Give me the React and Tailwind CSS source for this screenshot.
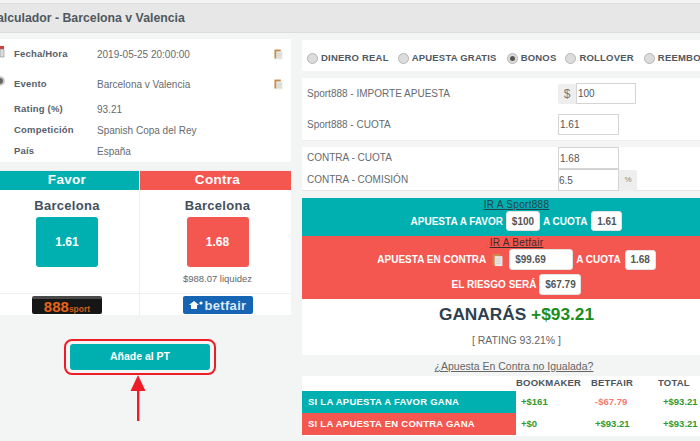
function CopyIcon({ className }) {
  return (
    <svg viewBox="0 0 10 12" className={className}>
      <rect x="0.5" y="0.5" width="7" height="10" fill="#c98a4b" />
      <rect x="2.5" y="2.5" width="7" height="9" fill="#e9e9e6" />
      <path d="M3.5 5h5M3.5 7h5M3.5 9h5" stroke="#c9c9c9" strokeWidth="0.7" />
    </svg>
  );
}

function InfoRow({ label, value, copy, className, icon }) {
  return (
    <div className={`flex items-center ${className}`}>
      {icon}
      <div className="w-[97px] pl-[14px] font-bold text-[#56606c] tracking-[0.2px]">{label}</div>
      <div className="flex-1 text-[10px] text-[#666b70]">{value}</div>
      {copy && <CopyIcon className="w-[9px] h-[11px] mr-[8px]" />}
    </div>
  );
}

function Chip({ children, className = "" }) {
  return (
    <span className={`inline-flex items-center justify-center h-[20px] rounded-[3px] bg-white border border-[#e3e3e3] text-[10px] font-bold text-[#555] ${className}`}>
      {children}
    </span>
  );
}

function Radio({ checked }) {
  return (
    <span className="inline-flex shrink-0 items-center justify-center w-[11px] h-[11px] rounded-full bg-[#dcdcdc] border border-[#b5b5b5] mr-[3px]">
      {checked && <span className="w-[5px] h-[5px] rounded-full bg-[#555]" />}
    </span>
  );
}

function BetColumn({ title, color, price, note, children, className = "" }) {
  return (
    <div className="flex flex-col">
      <div className={`h-[19px] flex items-center justify-center text-white font-bold text-[13.5px] tracking-[0.3px] ${color} ${className}`}>{title}</div>
      <div className={`h-[104px] flex flex-col items-center pt-[8px] border-b border-[#eeeeee] ${className}`}>
        <div className="text-[13px] leading-[16px] font-bold text-[#44505c] tracking-[0.3px]">Barcelona</div>
        <div className={`mt-[3px] w-[62px] h-[50px] rounded-[3px] flex items-center justify-center text-white font-bold text-[12px] ${color}`}>{price}</div>
        {note && <div className="mt-[5px] text-[9.5px] text-[#666]">{note}</div>}
      </div>
      <div className={`h-[22px] flex justify-center pt-[2px] ${className}`}>{children}</div>
    </div>
  );
}

export default function App() {
  return (
    <div className="w-[700px] h-[441px] overflow-hidden bg-[#f3f4f4] pt-[3px] text-[9.5px] text-[#555]" style={{ fontFamily: '"Liberation Sans", Arial, sans-serif' }}>
      {/* titulo */}
      <div className="h-[30px] bg-[#e7e7e7] border-t border-[#dddddd] border-b flex items-center overflow-hidden">
        <div className="-ml-[12px] text-[12.3px] font-bold text-[#50595f] whitespace-nowrap">Calculador - Barcelona v Valencia</div>
      </div>

      <div className="flex gap-[11px] pt-[6px]">
        {/* izquierda */}
        <div className="w-[291px] shrink-0 relative">
          <div className="h-[123px] bg-white flex flex-col pt-[6px]">
            <InfoRow label="Fecha/Hora" value="2019-05-25 20:00:00" copy className="h-[19px]"
              icon={
                <svg viewBox="0 0 5 12" className="absolute left-0 top-[7px] w-[5px] h-[12px]">
                  <rect x="0" y="0" width="4" height="3" fill="#d43f3a" />
                  <rect x="0" y="3" width="4" height="8" fill="#ddd" stroke="#777" strokeWidth="0.5" />
                </svg>
              }
            />
            <InfoRow label="Evento" value="Barcelona v Valencia" copy className="h-[19px] mt-[11px]"
              icon={<span className="absolute -left-[5px] top-[37px] w-[10px] h-[10px] rounded-full bg-[#666] border-2 border-[#ccc]" />}
            />
            <InfoRow label="Rating (%)" value="93.21" className="h-[14px] mt-[8px]" />
            <InfoRow label="Competición" value="Spanish Copa del Rey" className="h-[14px] mt-[7px]" />
            <InfoRow label="País" value="España" className="h-[14px] mt-[7px]" />
          </div>

          <div className="mt-[8px] bg-white grid grid-cols-[140px_1fr] h-[145px] border-t border-[#eeeeee]">
            <div className="border-r border-[#eeeeee]">
              <BetColumn title="Favor" color="bg-[#00b0b0]" price="1.61" className="pr-[5px]">
                <div className="w-[70px] h-[18px] rounded-[2px] bg-[#161616] border-t-[3px] border-[#4a4a4a] flex items-end justify-center leading-none overflow-hidden">
                  <span className="text-[15px] font-bold text-[#e8641b] leading-[15px]">888</span>
                  <span className="text-[8.5px] font-bold text-[#c9601f] leading-[10px]">sport</span>
                </div>
              </BetColumn>
            </div>
            <BetColumn title="Contra" color="bg-[#f4574f]" price="1.68" note="$988.07 liquidez" className="pl-[4px]">
              <div className="w-[70px] h-[18px] rounded-[2px] bg-[#1565b4] flex items-center justify-center gap-[2px]">
                <svg viewBox="0 0 14 10" className="w-[14px] h-[10px]">
                  <path d="M0 5 L5 1 L10 5 L8 5 L8 9 L2 9 L2 5 Z" fill="#fff" />
                  <circle cx="12" cy="3" r="1.6" fill="#fff" />
                </svg>
                <span className="text-[13px] font-bold text-[#dbe9f6] leading-none tracking-[0.3px]">betfair</span>
              </div>
            </BetColumn>
          </div>

          <div className="flex justify-center pt-[29px]">
            <button className="relative w-[140px] h-[26px] bg-[#00b0b0] rounded-[3px] text-white font-bold text-[10.5px] ml-[-11px]">
              Añade al PT
              {/* marca roja */}
              <span className="absolute -left-[6px] -right-[6px] -top-[5px] -bottom-[5px] rounded-[8px] border-[2px] border-[#ee1c25]" />
              <svg viewBox="0 0 16 48" className="absolute left-[60px] top-[31px] w-[16px] h-[48px]">
                <path d="M8 0 L15.5 16 L0.5 16 Z" fill="#ee1c25" />
                <rect x="7" y="15" width="2.4" height="31" fill="#ee1c25" />
              </svg>
            </button>
          </div>
        </div>

        {/* derecha: the panels run past the window edge */}
        <div className="flex-1 min-w-0 overflow-hidden pt-[1px]">
          <div className="w-[429px]">
            <div className="h-[31px] bg-white flex items-center pl-[5px] pt-[6px] font-bold text-[#50585f] tracking-[0.2px] whitespace-nowrap">
              <Radio /><span className="mr-[9px]">DINERO REAL</span>
              <Radio /><span className="mr-[10px]">APUESTA GRATIS</span>
              <Radio checked /><span className="mr-[9px]">BONOS</span>
              <Radio /><span className="mr-[10px]">ROLLOVER</span>
              <Radio /><span>REEMBOLSO</span>
            </div>

            <div className="mt-[7px] h-[63px] bg-white flex flex-col pl-[5px] text-[10px] text-[#666b70] border-b border-[#eeeeee]">
              <div className="h-[21px] mt-[5px] flex items-center">
                <span className="w-[251px]">Sport888 - IMPORTE APUESTA</span>
                <span className="w-[18px] h-[20px] bg-[#eeeeee] text-[#777] text-[12px] flex items-center justify-center rounded-l-[2px]">$</span>
                <span className="w-[60px] h-[21px] border border-[#d5d5d5] pl-[1px] flex items-center text-[#555]">100</span>
              </div>
              <div className="h-[21px] mt-[10px] flex items-center">
                <span className="w-[251px]">Sport888 - CUOTA</span>
                <span className="w-[61px] h-[21px] border border-[#d5d5d5] flex items-center pl-[1px] text-[#555]">1.61</span>
              </div>
            </div>

            <div className="mt-[6px] h-[44px] bg-white flex flex-col pl-[5px] text-[10px] text-[#666b70] border-b border-[#e6e6e6]">
              <div className="h-[22px] flex items-center">
                <span className="w-[251px] -mt-[2px]">CONTRA - CUOTA</span>
                <span className="w-[61px] h-[22px] border border-[#d5d5d5] flex items-center pl-[1px] text-[#555]">1.68</span>
              </div>
              <div className="h-[22px] flex items-center">
                <span className="w-[251px] -mt-[2px]">CONTRA - COMISIÓN</span>
                <span className="w-[61px] h-[22px] border border-[#d5d5d5] flex items-center text-[#555]">6.5</span>
                <span className="w-[18px] h-[21px] bg-[#eeeeee] flex items-center justify-center text-[8px] text-[#888] rounded-r-[2px]">%</span>
              </div>
            </div>

            <div className="mt-[7px] h-[38px] bg-[#00b0b0] flex flex-col items-center text-[10px] font-bold text-white">
              <div className="h-[13px] leading-[13px] underline font-normal text-[#23424a] tracking-[0.3px]">IR A Sport888</div>
              <div className="flex items-center gap-[3px]">
                <span>APUESTA A FAVOR</span>
                <Chip className="w-[34px]">$100</Chip>
                <span>A CUOTA</span>
                <Chip className="w-[31px] ml-[1px]">1.61</Chip>
              </div>
            </div>
            <div className="h-[63px] bg-[#f4574f] flex flex-col items-center text-[10px] font-bold text-white">
              <div className="h-[13px] leading-[13px] underline font-normal text-[#3c2a2a] tracking-[0.3px]">IR A Betfair</div>
              <div className="flex items-center gap-[3px]">
                <span>APUESTA EN CONTRA</span>
                <CopyIcon className="w-[11px] h-[14px] mx-[3px]" />
                <Chip className="w-[64px] h-[21px] justify-start pl-[5px]">$99.69</Chip>
                <span>A CUOTA</span>
                <Chip className="w-[31px] ml-[1px]">1.68</Chip>
              </div>
              <div className="flex items-center gap-[3px] pt-[4px]">
                <span>EL RIESGO SERÁ</span>
                <Chip className="w-[42px] h-[21px]">$67.79</Chip>
              </div>
            </div>

            <div className="h-[56px] bg-white flex flex-col items-center">
              <div className="pt-[4px] text-[17.3px] leading-[22px] font-bold text-[#2f3f4f]">
                GANARÁS <span className="text-[#1c8c1c]">+$93.21</span>
              </div>
              <div className="mt-[8px] text-[10.5px] text-[#666]">[ RATING 93.21% ]</div>
            </div>

            <div className="h-[21px] flex items-center justify-center underline text-[10.5px] text-[#666] pt-[3px] pr-[5px]">¿Apuesta En Contra no Igualada?</div>

            <div className="bg-white h-[60px] flex flex-col font-bold">
              <div className="h-[15px] grid grid-cols-[214px_75px_67px_1fr] items-center text-[#4a5560] tracking-[0.2px]">
                <span />
                <span>BOOKMAKER</span>
                <span>BETFAIR</span>
                <span>TOTAL</span>
              </div>
              <div className="h-[22px] grid grid-cols-[214px_74px_68px_1fr] items-center text-[#2f9a2f]">
                <span className="h-full bg-[#00b0b0] text-white flex items-center pl-[6px] tracking-[0.25px]">SI LA APUESTA A FAVOR GANA</span>
                <span className="pl-[5px]">+$161</span>
                <span className="pl-[5px] text-[#f47a73]">-$67.79</span>
                <span className="pl-[5px]">+$93.21</span>
              </div>
              <div className="h-[22px] grid grid-cols-[214px_74px_68px_1fr] items-center text-[#2f9a2f]">
                <span className="h-full bg-[#f4574f] text-white flex items-center pl-[6px] tracking-[0.25px]">SI LA APUESTA EN CONTRA GANA</span>
                <span className="pl-[5px]">+$0</span>
                <span className="pl-[5px]">+$93.21</span>
                <span className="pl-[5px]">+$93.21</span>
              </div>
            </div>
          </div>
        </div>
      </div>
    </div>
  );
}
